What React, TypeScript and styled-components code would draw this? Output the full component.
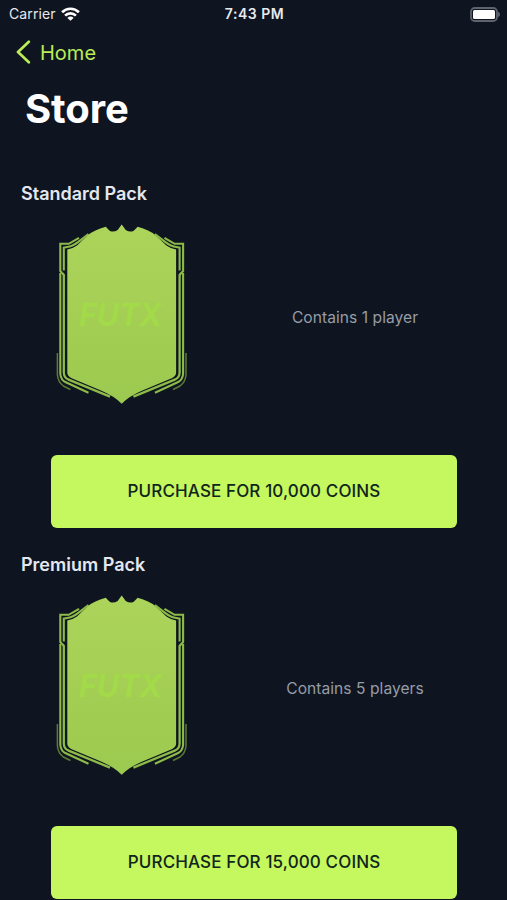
import React from "react";
import styled, { createGlobalStyle } from "styled-components";

const GlobalStyle = createGlobalStyle`
  * { box-sizing: border-box; }
  body { margin: 0; background: #0e1520; }
`;

const Screen = styled.div`
  width: 507px;
  height: 900px;
  overflow: hidden;
  display: flex;
  flex-direction: column;
  background: #0e1520;
  color: #fff;
  font-family: Inter, "Liberation Sans", sans-serif;
`;

const StatusBar = styled.header`
  height: 28px;
  flex: none;
  display: grid;
  grid-template-columns: 1fr auto 1fr;
  align-items: center;
  padding: 0 7px 0 9px;
  font-size: 14px;
  line-height: 28px;
  color: #e6e9ee;
`;

const Carrier = styled.div`
  display: flex;
  align-items: center;
  gap: 5px;
  letter-spacing: 0.1px;
`;

const Clock = styled.div`
  font-weight: 600;
  letter-spacing: 0.5px;
`;

const BatterySlot = styled.div`
  display: flex;
  justify-content: flex-end;
`;

const BackButton = styled.button`
  height: 48px;
  flex: none;
  display: flex;
  align-items: center;
  gap: 9px;
  padding: 0 0 0 16px;
  border: 0;
  background: none;
  color: #b9ec55;
  font: 400 20px/48px Inter, sans-serif;
`;

const BackLabel = styled.span`
  padding-top: 1px;
`;

const Title = styled.h1`
  margin: 0;
  height: 102px;
  flex: none;
  padding: 8px 0 0 25px;
  font-size: 40px;
  font-weight: 700;
  line-height: 50px;
  letter-spacing: -0.1px;
`;

const Pack = styled.section`
  height: 371px;
  flex: none;
  display: flex;
  flex-direction: column;
`;

const PackName = styled.h2`
  margin: 0;
  height: 44px;
  padding-left: 21px;
  font-size: 18px;
  font-weight: 600;
  line-height: 32px;
  color: #e4e7ef;
`;

const PackBody = styled.div`
  height: 233px;
  display: grid;
  grid-template-columns: 203px 304px;
`;

const CardSlot = styled.div`
  padding-left: 54px;
`;

const Description = styled.p`
  margin: 0;
  height: 192px;
  text-align: center;
  font-size: 15.6px;
  line-height: 192px;
  letter-spacing: 0.04px;
  color: #979ca6;
`;

const PurchaseButton = styled.button`
  width: 406px;
  height: 73px;
  margin: 0 0 0 51px;
  padding: 0;
  border: 0;
  border-radius: 6px;
  background: #c5f75e;
  color: #10251b;
  font: 500 17px/73px Inter, sans-serif;
  letter-spacing: 0.13px;
`;

const WifiIcon = () => (
  <svg width="19" height="14" viewBox="0 0 19 14" fill="none" stroke="#fff" strokeWidth="2.7">
    <path d="M1.1 5.2a12 12 0 0 1 16.8 0" />
    <path d="M4.1 8.6a7.7 7.7 0 0 1 10.8 0" />
    <path d="M9.5 13.8 6.4 10.9a4.4 4.4 0 0 1 6.2 0z" fill="#fff" stroke="none" />
  </svg>
);

const BatteryIcon = () => (
  <svg width="31" height="15" viewBox="0 0 31 15">
    <rect x="2" y="1" width="26" height="13" rx="3.7" fill="#10161f" stroke="#5e636d" strokeWidth="1.8" />
    <rect x="4" y="3" width="22" height="9" rx="1.5" fill="#fff" />
    <path d="M29 4.8q2 .6 2 2.6t-2 2.6z" fill="#5e636d" />
  </svg>
);

const ChevronIcon = () => (
  <svg width="15" height="24" viewBox="0 0 15 24" fill="none" stroke="#b9ec55" strokeWidth="2.7" strokeLinecap="round" strokeLinejoin="round">
    <path d="M12.8 1.8 2 12l10.8 10.2" />
  </svg>
);

const CardFrame = () => (
  <g fill="none" stroke="#8dba48" strokeWidth="2.1">
    <path d="M25 15.8 14.8 21.8H6.3V49l1.7 2" />
    <path d="M34.5 12 24 20.1q-5.6 4.4-11 4.9l-3.2.6V48.5" />
    <path d="M6.3 51V152q.6 6 5.5 8.3L34.5 170.8" />
    <path d="M8 50.8 9.8 53V151q.4 4.8 4.8 6.6L56 174.6" strokeWidth="2.3" />
    <path d="M3.4 131v22q.6 7 6 11l7 3.5" stroke="#5d7b37" strokeWidth="1.5" />
  </g>
);

const PackCard = ({ id }: { id: string }) => (
  <svg width="136" height="184" viewBox="0 0 136 184" role="img" aria-label="FUTX">
    <defs>
      <linearGradient id={id} x1="0" y1="0" x2="0" y2="1">
        <stop offset="0" stopColor="#acd45a" />
        <stop offset="1" stopColor="#9cc94f" />
      </linearGradient>
    </defs>
    <CardFrame />
    <g transform="matrix(-1 0 0 1 135.4 0)">
      <CardFrame />
    </g>
    <path
      d="M67.7 2.5q-2.2 3-4 5.4-4 2.6-7.7 1-1.3-.7-4.2-4.1Q40 8 34.3 13T23 23.4q-4.2 3-9.7 4.2V151q.6 3.5 4.4 5.3L47 168.5q13 5.5 20.7 13.2 7.7-7.7 20.7-13.2l29.3-12.2q3.8-1.8 4.4-5.3V27.6q-5.5-1.2-9.7-4.2-5.7-5.4-11.3-10.4T83.6 4.8q-2.9 3.4-4.2 4.1-3.7 1.6-7.7-1-1.8-2.4-4-5.4z"
      fill={`url(#${id})`}
    />
    <text
      x="25"
      y="103.7"
      textLength="83"
      lengthAdjust="spacingAndGlyphs"
      fill="#a2da49"
      fontFamily="Inter, sans-serif"
      fontSize="31"
      fontWeight="700"
      fontStyle="italic"
    >
      FUTX
    </text>
  </svg>
);

const packs = [
  { id: "standard", name: "Standard Pack", contents: "Contains 1 player", price: "10,000" },
  { id: "premium", name: "Premium Pack", contents: "Contains 5 players", price: "15,000" },
];

export default function App() {
  return (
    <>
      <GlobalStyle />
      <Screen>
        <StatusBar>
          <Carrier>
            Carrier
            <WifiIcon />
          </Carrier>
          <Clock>7:43 PM</Clock>
          <BatterySlot>
            <BatteryIcon />
          </BatterySlot>
        </StatusBar>
        <BackButton>
          <ChevronIcon />
          <BackLabel>Home</BackLabel>
        </BackButton>
        <Title>Store</Title>
        {packs.map((pack) => (
          <Pack key={pack.id}>
            <PackName>{pack.name}</PackName>
            <PackBody>
              <CardSlot>
                <PackCard id={pack.id} />
              </CardSlot>
              <Description>{pack.contents}</Description>
            </PackBody>
            <PurchaseButton>PURCHASE FOR {pack.price} COINS</PurchaseButton>
          </Pack>
        ))}
      </Screen>
    </>
  );
}
